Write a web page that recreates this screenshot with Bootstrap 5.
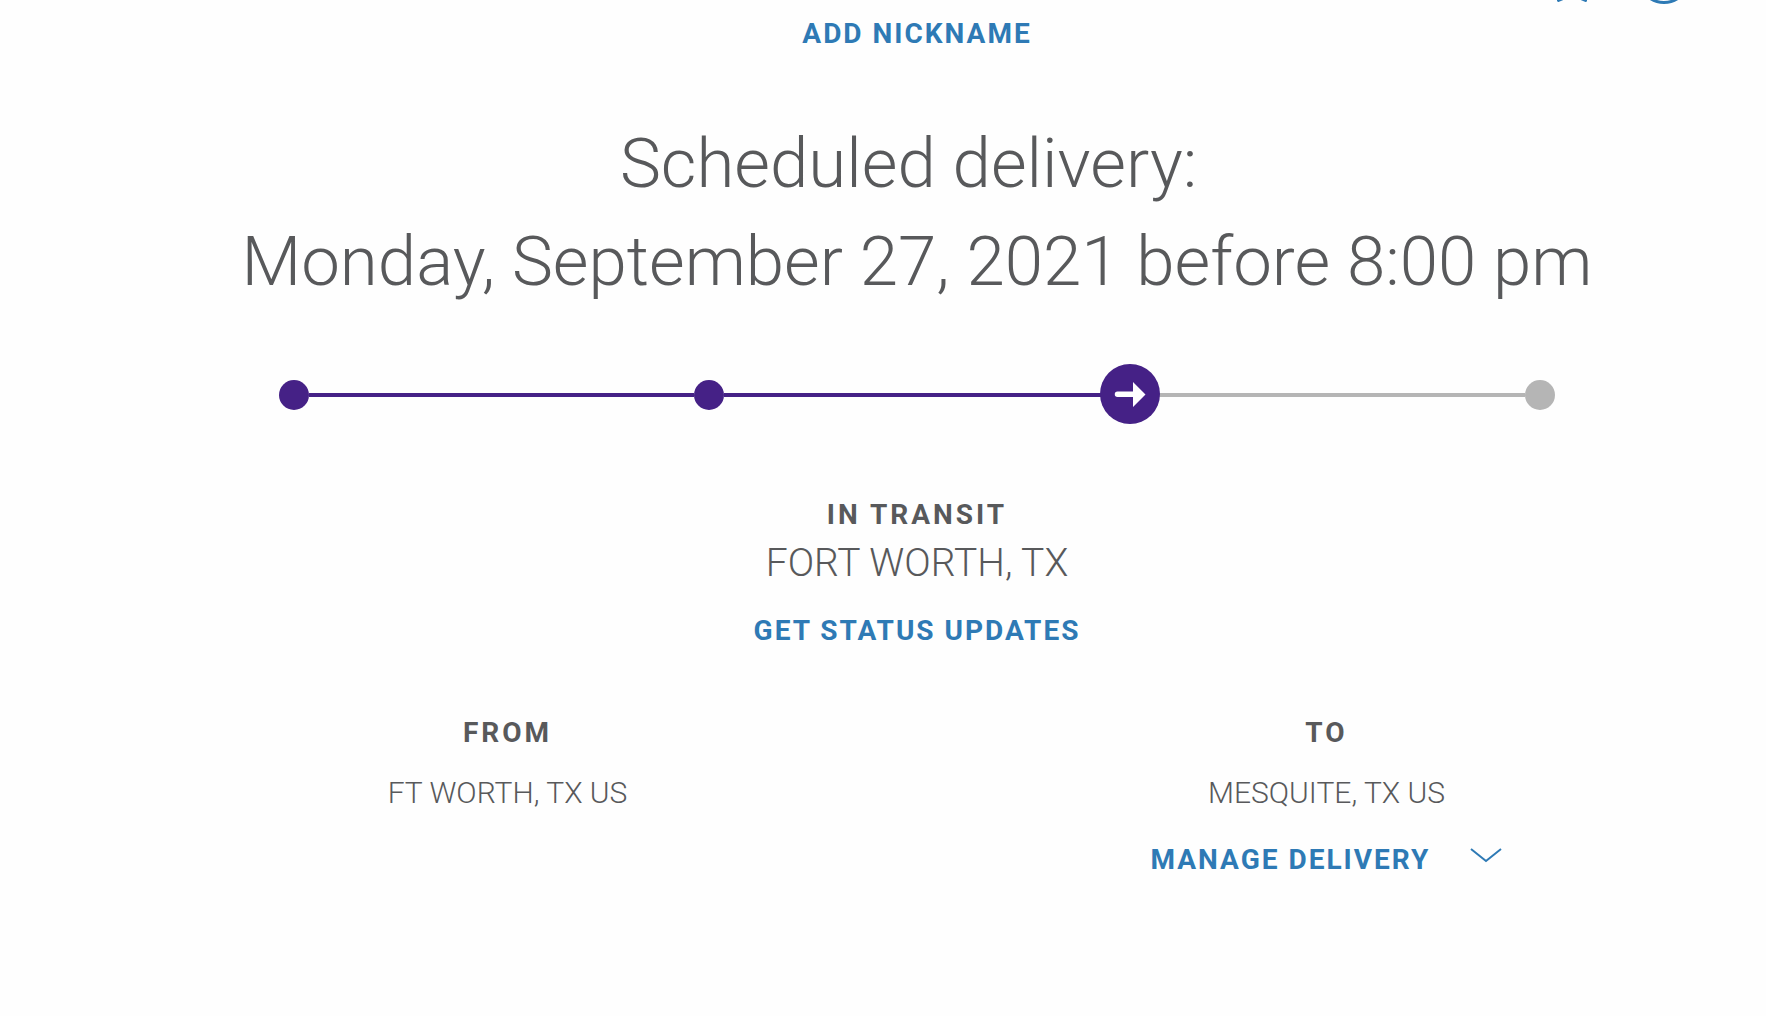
<!DOCTYPE html>
<html lang="en">
<head>
<meta charset="utf-8">
<meta name="viewport" content="width=device-width, initial-scale=1">
<title>Shipment tracking</title>
<link href="https://cdn.jsdelivr.net/npm/bootstrap@5.3.0/dist/css/bootstrap.min.css" rel="stylesheet">
<style>
  body { font-family: Roboto, "Liberation Sans", sans-serif; font-weight: 300; color: #58595b; background: #fefefe; overflow-x: hidden; }
  .shipment { padding-left: 98px; padding-right: 30px; }
  .toolbar { margin-top: -32px; height: 36px; padding-right: 45px; gap: 47px; }
  .icon-btn { color: #2e7ab5; background: none; line-height: 0; }
  .label-text, .action { font-size: 28px; line-height: 40px; font-weight: 700; letter-spacing: 2px; margin: 0; }
  .label-text { letter-spacing: 3px; }
  .action { color: #2e7ab5; text-decoration: none; background: none; }
  .nickname { padding-top: 10px; }
  .delivery-date { font-size: 69px; line-height: 98px; font-weight: 300; margin: 61px 0 69px; }
  .tracker { padding: 0 181px; margin-bottom: 85px; }
  .stop { width: 30px; height: 30px; border-radius: 50%; background: #452186; flex: none; }
  .stop-current { width: 60px; height: 60px; margin: -16px -20px -14px -10px; position: relative; }
  .stop-pending { background: #b5b5b5; }
  .leg { height: 4px; background: #452186; }
  .leg-pending { background: #b5b5b5; }
  .current-city { font-size: 39px; line-height: 56px; margin-bottom: 20px; }
  .route { margin-top: 62px; }
  .place { font-size: 30px; line-height: 40px; margin-top: 20px; }
  .manage { margin-top: 27px; gap: 40px; }
  .chevron { margin-top: 8px; }
</style>
</head>
<body>
<main class="shipment">
  <div class="toolbar d-flex justify-content-end align-items-end">
    <button class="icon-btn border-0 p-0" type="button" aria-label="Add to watch list">
      <svg width="36" height="36" viewBox="0 0 36 36" fill="none" stroke="currentColor" stroke-width="3" stroke-linejoin="round"><path d="M18 3l4.500 9.500 11 1.500-8 7.500 6 11-13.500-6-13.500 6 6-11-8-7.500 11-1.500z"/></svg>
    </button>
    <button class="icon-btn border-0 p-0" type="button" aria-label="Help">
      <svg width="54" height="36" viewBox="0 0 54 36" fill="none" stroke="currentColor" stroke-width="3"><circle cx="27" cy="9.500" r="25"/></svg>
    </button>
  </div>
  <div class="nickname text-center">
    <button class="action border-0 p-0" type="button">ADD NICKNAME</button>
  </div>
  <h1 class="delivery-date text-center">Scheduled delivery:&nbsp;<br>Monday, September 27, 2021 before 8:00 pm</h1>
  <div class="tracker d-flex align-items-center">
    <span class="stop"></span><span class="leg flex-fill"></span>
    <span class="stop"></span><span class="leg flex-fill"></span>
    <span class="stop stop-current">
      <svg class="d-block" width="60" height="60" viewBox="0 0 60 60" fill="#fff"><path d="M17.500 27.500h15.500V18l12.500 12.500L33 43V33H17.500a2.700 2.700 0 0 1 0-5.500z"/></svg>
    </span><span class="leg leg-pending flex-fill"></span>
    <span class="stop stop-pending"></span>
  </div>
  <section class="d-flex flex-column align-items-center">
    <h2 class="label-text">IN TRANSIT</h2>
    <div class="current-city">FORT WORTH, TX</div>
    <a class="action" href="#">GET STATUS UPDATES</a>
  </section>
  <div class="row g-0 text-center route">
    <section class="col-6">
      <h2 class="label-text">FROM</h2>
      <div class="place">FT WORTH, TX US</div>
    </section>
    <section class="col-6">
      <h2 class="label-text">TO</h2>
      <div class="place">MESQUITE, TX US</div>
      <button class="action manage border-0 p-0 d-inline-flex" type="button">MANAGE DELIVERY
        <svg class="chevron" width="32" height="16" viewBox="0 0 32 16" fill="none" stroke="currentColor" stroke-width="2"><path d="M1 1l15 12L31 1"/></svg>
      </button>
    </section>
  </div>
</main>
<script src="https://cdn.jsdelivr.net/npm/bootstrap@5.3.0/dist/js/bootstrap.bundle.min.js"></script>
</body>
</html>
